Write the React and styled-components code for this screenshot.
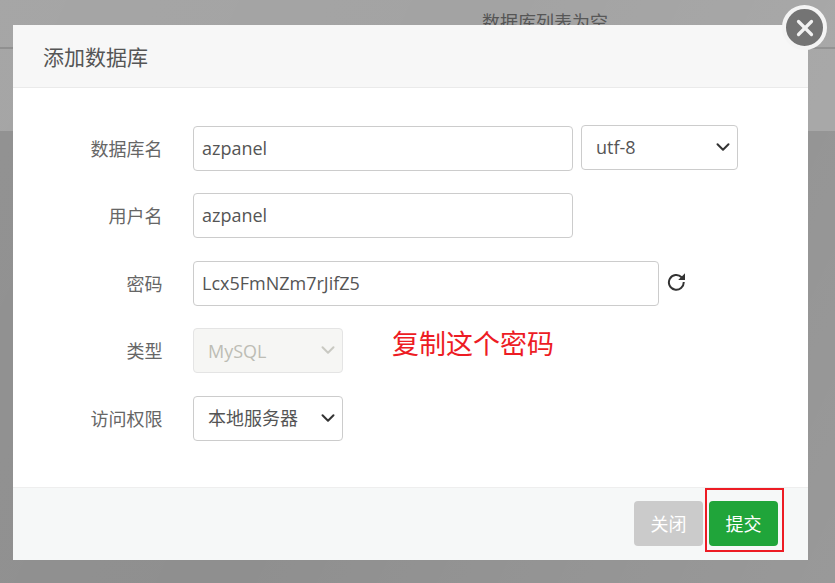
import React from "react";
import styled, { createGlobalStyle } from "styled-components";
import { ChevronDown, X } from "lucide-react";

const GlobalStyle = createGlobalStyle`
  html, body {
    margin: 0;
    padding: 0;
    height: 100%;
    overflow: hidden;
  }
  * { box-sizing: border-box; }
  body {
    font-family: "Open Sans", "Noto Sans CJK SC", sans-serif;
  }
`;

const Page = styled.div`
  position: relative;
  width: 835px;
  height: 583px;
  overflow: hidden;
  background: #8f8f8f;
`;
const Backdrop = styled.div`
  height: 131px;
  background: #a3a3a3;
`;
const TopBar = styled.div`
  height: 49px;
  border-bottom: 2px solid #8d8d8d;
  padding: 10px 0 0 482px;
  font-size: 18px;
  line-height: 24px;
  color: #555;
`;
const Vignette = styled.div`
  position: absolute;
  inset: 0;
  background: linear-gradient(115deg, rgba(255, 255, 255, 0.03) 0%, rgba(0, 0, 0, 0) 45%, rgba(255, 255, 255, 0.09) 100%);
`;

const Modal = styled.div`
  position: absolute;
  left: 13px;
  top: 25px;
  width: 795px;
  height: 535px;
  display: flex;
  flex-direction: column;
  background: #fff;
`;
const Header = styled.div`
  height: 63px;
  padding-left: 30px;
  display: flex;
  align-items: center;
  background: #f7f7f7;
  border-bottom: 1px solid #eaeaea;
  font-size: 21px;
  color: #555;
`;
const CloseButton = styled.button`
  position: absolute;
  right: -19px;
  top: -20px;
  width: 45px;
  height: 45px;
  padding: 0;
  display: flex;
  align-items: center;
  justify-content: center;
  border: 4px solid #f4f4f4;
  border-radius: 50%;
  background: #747474;
  color: #f2f2f2;
`;

const Form = styled.div`
  flex: 1;
  padding-top: 37.9px;
  display: flex;
  flex-direction: column;
  gap: 22.5px;
`;
const Row = styled.div`
  height: 45px;
  display: flex;
  align-items: center;
`;
const Label = styled.div`
  width: 150px;
  margin-right: 30px;
  padding-right: 0.6px;
  padding-bottom: 1px;
  text-align: right;
  font-size: 18px;
  color: #666;
`;
const Input = styled.input`
  width: ${(p) => p.$width}px;
  height: 45px;
  padding: 0 8px 1px;
  border: 1px solid #ccc;
  border-radius: 4px;
  outline: none;
  font: inherit;
  font-size: 18px;
  color: #555;
  background: #fff;
`;
const SelectWrap = styled.div`
  position: relative;
  display: flex;
  width: ${(p) => p.$width}px;
  height: 45px;
  margin-left: ${(p) => p.$gap || 0}px;
  margin-top: ${(p) => (p.$lift ? -2 : 0)}px;
  color: ${(p) => (p.$muted ? "#c9c9c2" : "#333")};
`;
const Select = styled.select`
  width: 100%;
  height: 100%;
  padding: 0 14px;
  appearance: none;
  border: 1px solid #ccc;
  border-radius: 4px;
  outline: none;
  font: inherit;
  font-size: 18px;
  color: #555;
  background: #fff;
  &:disabled {
    color: #bdbdb5;
    background: #f6f6f4;
    border-color: #e4e4e4;
    opacity: 1;
  }
`;
const Chevron = styled(ChevronDown)`
  position: absolute;
  right: 4px;
  top: 11px;
  pointer-events: none;
`;
const Refresh = styled.svg`
  width: 19px;
  height: 19px;
  margin-left: 8px;
  margin-top: -3px;
  color: #333;
`;
const Note = styled.div`
  align-self: flex-start;
  margin-left: 49px;
  font-size: 27px;
  line-height: 31px;
  color: #ed1c24;
`;

const Footer = styled.div`
  height: 73px;
  padding-right: 30px;
  padding-bottom: 1px;
  display: flex;
  align-items: center;
  justify-content: flex-end;
  gap: 6px;
  background: #f6f8f8;
  border-top: 1px solid #eeeeee;
`;
const Button = styled.button`
  position: relative;
  width: 69px;
  height: 45px;
  padding: 0 0 2px;
  border: none;
  border-radius: 4px;
  font: inherit;
  font-size: 18px;
  color: #fff;
  background: ${(p) => (p.$primary ? "#20a53a" : "#cbcbcb")};
`;
const RedBox = styled.span`
  position: absolute;
  left: -4px;
  right: -6px;
  top: -13px;
  bottom: -6px;
  border: 2px solid #ed1c24;
`;

const Dropdown = ({ width, gap, lift, disabled, children }) => (
  <SelectWrap $width={width} $gap={gap} $lift={lift} $muted={disabled}>
    <Select disabled={disabled}>
      <option>{children}</option>
    </Select>
    <Chevron size={22} strokeWidth={2.2} />
  </SelectWrap>
);

const App = () => {
  return (
    <Page>
      <GlobalStyle />
      <Backdrop>
        <TopBar>数据库列表为空</TopBar>
      </Backdrop>
      <Vignette />
      <Modal>
        <Header>添加数据库</Header>
        <CloseButton aria-label="关闭">
          <X size={26} strokeWidth={3} />
        </CloseButton>
        <Form>
          <Row>
            <Label>数据库名</Label>
            <Input $width={380} defaultValue="azpanel" />
            <Dropdown width={157} gap={8} lift>utf-8</Dropdown>
          </Row>
          <Row>
            <Label>用户名</Label>
            <Input $width={380} defaultValue="azpanel" />
          </Row>
          <Row>
            <Label>密码</Label>
            <Input $width={466} defaultValue="Lcx5FmNZm7rJifZ5" />
            <Refresh viewBox="0 0 19 19" fill="none">
              <path d="M14.6 5.2A7.4 7.4 0 1 0 16.7 10" stroke="currentColor" strokeWidth="2" />
              <path d="M18 1.2V8h-6.8z" fill="currentColor" />
            </Refresh>
          </Row>
          <Row>
            <Label>类型</Label>
            <Dropdown width={150} disabled>MySQL</Dropdown>
            <Note>复制这个密码</Note>
          </Row>
          <Row>
            <Label>访问权限</Label>
            <Dropdown width={150}>本地服务器</Dropdown>
          </Row>
        </Form>
        <Footer>
          <Button>关闭</Button>
          <Button $primary>
            提交
            <RedBox />
          </Button>
        </Footer>
      </Modal>
    </Page>
  );
};

export default App;
